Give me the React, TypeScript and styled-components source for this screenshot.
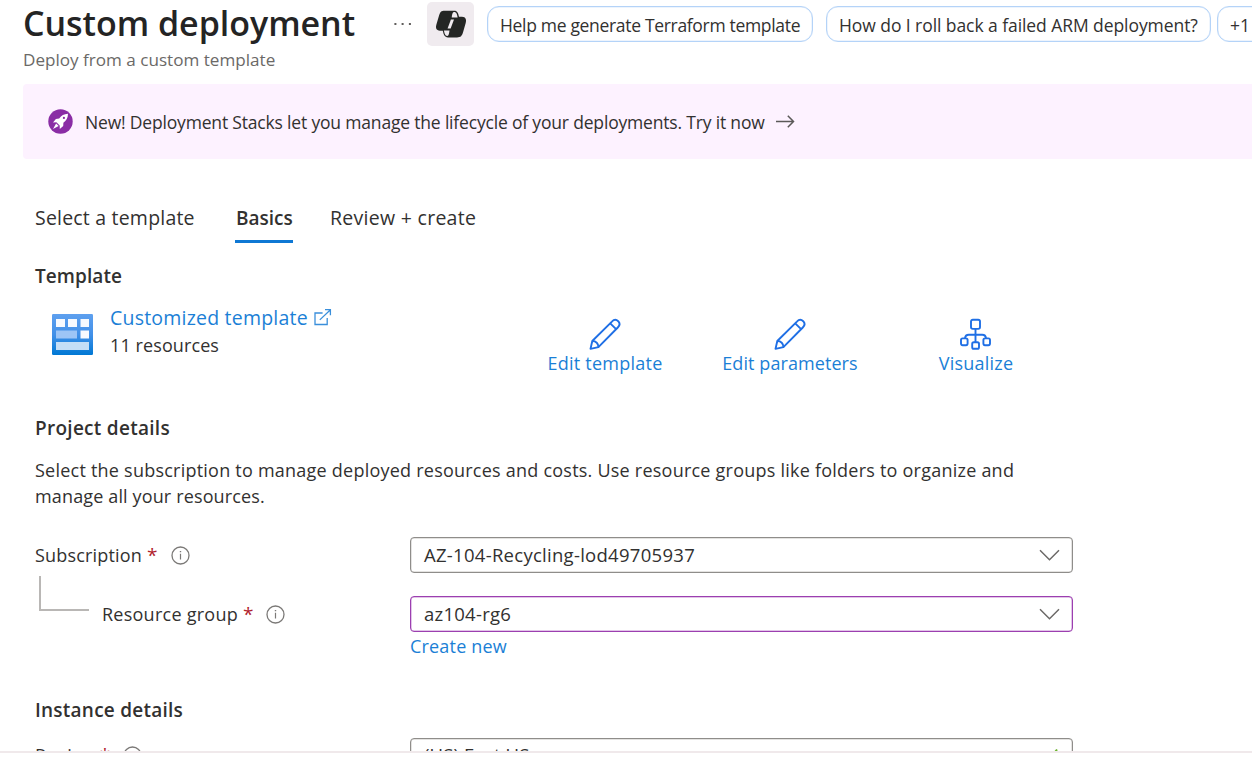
import React from "react";
import styled, { createGlobalStyle, css } from "styled-components";

const GlobalStyle = createGlobalStyle`
  * { box-sizing: border-box; }
  body {
    margin: 0;
    background: #fff;
    color: #323130;
    font-family: "Open Sans", "Noto Sans", sans-serif;
    font-size: 18px;
    overflow: hidden;
  }
  svg { display: block; flex: none; }
`;

const tracking = css<{ $ls?: number }>`
  letter-spacing: ${(p) => p.$ls ?? 0}px;
  white-space: nowrap;
`;

const Page = styled.div`
  width: 1252px;
  height: 775px;
  display: flex;
  flex-direction: column;
  overflow: hidden;
`;

const Blade = styled.main`
  height: 751px;
  flex: none;
  overflow: hidden;
`;

const Footer = styled.footer`
  flex: 1;
  border-top: 2px solid #f0e9eb;
  background: #fff;
`;

const TitleBar = styled.header`
  display: flex;
  align-items: center;
  height: 48px;
  padding-left: 23px;
`;

const Title = styled.h1`
  ${tracking}
  flex: none;
  margin: 0;
  width: 371px;
  font-size: 34px;
  line-height: 48px;
  padding-bottom: 2px;
  font-weight: 600;
  color: #242424;
`;

const MoreButton = styled.span`
  display: flex;
  flex: none;
  width: 33px;
`;

const CopilotButton = styled.span`
  display: flex;
  align-items: center;
  justify-content: center;
  flex: none;
  width: 47px;
  height: 44px;
  border-radius: 5px;
  background: #f0ebef;
  margin-right: 13px;
`;

const Chip = styled.span<{ $w: number; $gap: number }>`
  ${tracking}
  flex: none;
  display: flex;
  align-items: center;
  width: ${(p) => p.$w}px;
  height: 36px;
  margin-right: ${(p) => p.$gap}px;
  padding: 1px 0 0 12px;
  border: 1px solid #b4d3f8;
  box-shadow: inset 0 0 0 0.5px #dceafb;
  border-radius: 12px;
  font-size: 17.5px;
`;

const Subtitle = styled.div`
  ${tracking}
  padding-left: 23px;
  height: 36px;
  line-height: 23px;
  font-size: 17.1px;
  color: #6b6967;
`;

const Banner = styled.section`
  display: flex;
  align-items: center;
  height: 75px;
  margin-left: 23px;
  padding-left: 25px;
  border-radius: 4px 0 0 4px;
  background: #fdf2ff;
`;

const BannerText = styled.span`
  ${tracking}
  font-size: 17.5px;
  margin: 1px 11px 0 12px;
`;

const Tabs = styled.nav`
  display: flex;
  gap: 36px;
  height: 48px;
  margin: 36px 0 0 34px;
`;

const Tab = styled.span<{ $active?: boolean; $w: number }>`
  ${tracking}
  width: ${(p) => p.$w}px;
  height: 48px;
  padding-left: 1px;
  line-height: 46px;
  font-size: ${(p) => (p.$active ? 19 : 19.5)}px;
  font-weight: ${(p) => (p.$active ? 600 : 400)};
  border-bottom: 3px solid ${(p) => (p.$active ? "#0f78d4" : "transparent")};
`;

const Content = styled.div`
  padding-left: 35px;
`;

const SectionTitle = styled.h2<{ $top: number }>`
  ${tracking}
  margin: ${(p) => p.$top}px 0 0;
  font-size: 19px;
  line-height: 26px;
  font-weight: 600;
`;

const TemplateRow = styled.div`
  display: flex;
  height: 86px;
  padding: 15px 0 0 17px;
`;

const TemplateIconBox = styled.div`
  padding-top: 10px;
  width: 58px;
`;

const TemplateInfo = styled.div`
  width: 437px;
  line-height: 28px;
`;

const TemplateLink = styled.a`
  ${tracking}
  display: flex;
  align-items: center;
  gap: 6px;
  height: 27px;
  font-size: 19.5px;
  color: #1b7fd6;
`;

const ResourceCount = styled.div`
  ${tracking}
`;

const Action = styled.a<{ $w: number; $gap: number }>`
  ${tracking}
  display: flex;
  flex-direction: column;
  align-items: center;
  width: ${(p) => p.$w}px;
  margin-right: ${(p) => p.$gap}px;
  padding-top: 14px;
  line-height: 27px;
  color: #1b7fd6;
`;

const Paragraph = styled.p`
  margin: 16px 0 28px;
  line-height: 26px;
`;

const Line = styled.span`
  ${tracking}
  display: block;
`;

const Fields = styled.div<{ $top: number }>`
  padding-top: ${(p) => p.$top}px;
`;

const FieldRow = styled.div<{ $gap: number; $h?: number }>`
  display: flex;
  height: ${(p) => p.$h ?? 36}px;
  margin-bottom: ${(p) => p.$gap}px;
`;

const LabelCell = styled.div`
  display: flex;
  align-items: center;
  width: 375px;
  padding-top: 1px;
`;

const Label = styled.label`
  ${tracking}
  margin-bottom: 2px;
`;

const Required = styled.span`
  margin: 0 13px 2px 5px;
  color: #b0222c;
  font-size: 19px;
`;

const Branch = styled.span`
  align-self: flex-start;
  flex: none;
  width: 50px;
  height: 35px;
  margin: -21px 13px 0 4px;
  border: solid #b9b7b5;
  border-width: 0 0 2px 2px;
`;

const Select = styled.div<{ $focused?: boolean }>`
  ${tracking}
  display: flex;
  align-items: center;
  justify-content: space-between;
  width: 663px;
  height: 100%;
  padding: 0 12px 1px 13px;
  font-size: 18.5px;
  border: 1px solid ${(p) => (p.$focused ? "#9c3fb0" : "#8f8d8a")};
  box-shadow: inset 0 0 0 0.5px ${(p) => (p.$focused ? "#c58bd2" : "#c9c7c4")};
  border-radius: 4px;
`;

const CreateLink = styled.a`
  ${tracking}
  display: block;
  height: 28px;
  margin-left: 375px;
  line-height: 28px;
  color: #1b7fd6;
`;

const Dots = () => (
  <svg width="18" height="4" viewBox="0 0 18 4" fill="#5f5d5b">
    <rect x="0.4" y="1" width="2" height="2" />
    <rect x="7.6" y="1" width="2" height="2" />
    <rect x="14.9" y="1" width="2" height="2" />
  </svg>
);

const CopilotIcon = () => (
  <svg width="32" height="28" viewBox="0 0 32 28">
    <path d="M9.8.7H19.4C22.4.7 23.2 3 24 6.8H27C30.9 7 31.6 9.8 30.7 13L28.2 21.8C27 26 25.8 27.4 22 27.4H13C9.6 27.4 8.6 24.6 7.8 20.8H5C1 20.6.5 17.8 1.4 14.6L3.9 6C5.1 1.9 6.2.7 9.8.7Z" fill="#242624" />
    <path d="M18.8 2.1C21.4 1.9 22 4.2 22.6 7.4H16.7C17.1 4.6 17.5 2.4 18.8 2.1Z" fill="#f0ebef" />
    <path d="M8.9 20.6H14.5C14.1 23.4 13.8 25.9 12.3 26C10.2 26 9.5 23.4 8.9 20.6Z" fill="#f0ebef" />
    <path d="M15.9 9.4H19L15.6 18.6H12.6Z" fill="#f0ebef" />
  </svg>
);

const RocketBadge = () => (
  <svg width="25" height="25" viewBox="0 0 25 25">
    <circle cx="12.5" cy="12.5" r="12.2" fill="#8a2da5" />
    <path d="M20 4.8C15.9 5 13.4 6.6 11.2 9.6L7.9 9.9L5 13.4L8.4 13.3L11.7 16.6L11.8 19.9L15.2 17L15.4 13.8C18.3 11.7 19.9 9 20 4.8Z" fill="#fff" />
    <path d="M8.1 14.4L5 20L10.6 17Z" fill="#fff" />
    <circle cx="15.9" cy="8.9" r="1.1" fill="#8a2da5" />
  </svg>
);

const ArrowIcon = () => (
  <svg width="20" height="16" viewBox="0 0 20 16" fill="none" stroke="#5b5958" strokeWidth="1.5">
    <path d="M0 7.5H17.5M11.8 1.7L17.5 7.5L11.8 13.3" />
  </svg>
);

const TemplateIcon = () => (
  <svg width="41" height="41" viewBox="0 0 41 41">
    <defs>
      <linearGradient id="tile" x1="0" y1="0" x2="0" y2="1">
        <stop offset="0" stopColor="#5ea0ef" />
        <stop offset="0.5" stopColor="#4290e8" />
        <stop offset="1" stopColor="#0078d4" />
      </linearGradient>
    </defs>
    <rect width="41" height="41" rx="1.3" fill="url(#tile)" />
    <path d="M4 5H13V13H4ZM16 5H25V13H16ZM28.5 5H37V13H28.5ZM28.5 16.5H37V24.5H28.5Z" fill="#f6f9fe" />
    <path d="M4 16.5H25V24.5H4Z" fill="#9dc5f6" />
    <path d="M4 28H37V36H4Z" fill="#c5def6" />
  </svg>
);

const ExternalIcon = () => (
  <svg width="18" height="20" viewBox="0 0 18 20" fill="none" stroke="#3a8fdb" strokeWidth="1.3">
    <path d="M8.6 5H1V16.5H13.2V9.9M5.8 11.9L16.2 2M11 1.7H16.4V7.3" />
  </svg>
);

const PencilIcon = () => (
  <svg width="32" height="32" viewBox="0 0 32 32" fill="none" stroke="#1f6fe5" strokeWidth="1.9" strokeLinejoin="round">
    <path d="M1.5 30.9L3.3 23L22.9 3.6C24.9 1.5 27.4 1.5 29.2 3.2C30.9 5 30.9 7.5 28.8 9.5L9.4 29.1Z" />
    <path d="M21.2 5.3L27.1 11.2M3.3 23C6.8 22.9 9.6 25.6 9.4 29.1" />
  </svg>
);

const HierarchyIcon = () => (
  <svg width="32" height="32" viewBox="0 0 32 32" fill="none" stroke="#1f6fe5" strokeWidth="1.9">
    <rect x="11" y="1.7" width="9" height="9.2" rx="1.8" />
    <rect x="1" y="20.4" width="6.6" height="6.8" rx="1.6" />
    <rect x="12.2" y="24.2" width="6.8" height="6.6" rx="1.6" />
    <rect x="23.4" y="20.4" width="6.6" height="6.8" rx="1.6" />
    <path d="M15.5 10.9V24.2M5 20.4C5.2 18 6.5 16.8 8.8 16.8H22.2C24.5 16.8 25.8 18 26 20.4" />
  </svg>
);

const InfoIcon = () => (
  <svg width="19" height="19" viewBox="0 0 19 19">
    <circle cx="9.5" cy="9.5" r="8.5" fill="none" stroke="#7b7977" strokeWidth="1.3" />
    <path d="M8.9 7.8H10.1V13.4H8.9ZM8.8 4.9H10.2V6.3H8.8Z" fill="#7b7977" />
  </svg>
);

const ChevronIcon = () => (
  <svg width="21" height="12" viewBox="0 0 21 12" fill="none" stroke="#6b6967" strokeWidth="1.5">
    <path d="M1 1.2L10.5 10.7L20 1.2" />
  </svg>
);

const CheckIcon = () => (
  <svg width="16" height="14" viewBox="0 0 16 14" fill="none" stroke="#6bb32e" strokeWidth="2">
    <path d="M1 8L5 12L13 1.5" />
  </svg>
);

type FieldLabelProps = { text: string; ls: number; nested?: boolean };

const FieldLabel = ({ text, ls, nested }: FieldLabelProps) => (
  <LabelCell>
    {nested && <Branch />}
    <Label $ls={ls}>{text}</Label>
    <Required>*</Required>
    <InfoIcon />
  </LabelCell>
);

export default function App() {
  return (
    <Page>
      <GlobalStyle />
      <Blade>
        <TitleBar>
          <Title $ls={-0.03}>Custom deployment</Title>
          <MoreButton><Dots /></MoreButton>
          <CopilotButton><CopilotIcon /></CopilotButton>
          <Chip $w={326} $gap={13} $ls={-0.32}>Help me generate Terraform template</Chip>
          <Chip $w={385} $gap={6} $ls={-0.07}>How do I roll back a failed ARM deployment?</Chip>
          <Chip $w={60} $gap={0}>+1</Chip>
        </TitleBar>
        <Subtitle>Deploy from a custom template</Subtitle>
        <Banner>
          <RocketBadge />
          <BannerText $ls={-0.18}>
            New! Deployment Stacks let you manage the lifecycle of your deployments. Try it now
          </BannerText>
          <ArrowIcon />
        </Banner>
        <Tabs>
          <Tab $w={165} $ls={0.2}>Select a template</Tab>
          <Tab $w={58} $ls={0} $active>Basics</Tab>
          <Tab $w={150} $ls={0.28}>Review + create</Tab>
        </Tabs>
        <Content>
          <SectionTitle $top={20} $ls={0.07}>Template</SectionTitle>
          <TemplateRow>
            <TemplateIconBox><TemplateIcon /></TemplateIconBox>
            <TemplateInfo>
              <TemplateLink $ls={0.21}>Customized template <ExternalIcon /></TemplateLink>
              <ResourceCount $ls={0.1}>11 resources</ResourceCount>
            </TemplateInfo>
            <Action $w={116} $gap={59} $ls={0.24}><PencilIcon />Edit template</Action>
            <Action $w={136} $gap={80} $ls={0.08}><PencilIcon />Edit parameters</Action>
            <Action $w={76} $gap={0} $ls={0.24}><HierarchyIcon />Visualize</Action>
          </TemplateRow>
          <SectionTitle $top={40} $ls={0.28}>Project details</SectionTitle>
          <Paragraph>
            <Line $ls={0.23}>
              Select the subscription to manage deployed resources and costs. Use resource groups like folders to organize and
            </Line>
            <Line $ls={0.14}>manage all your resources.</Line>
          </Paragraph>
          <FieldRow $gap={23}>
            <FieldLabel text="Subscription" ls={0.18} />
            <Select $ls={0.28}>AZ-104-Recycling-lod49705937<ChevronIcon /></Select>
          </FieldRow>
          <FieldRow $gap={0}>
            <FieldLabel text="Resource group" ls={0.25} nested />
            <Select $ls={0.25} $focused>az104-rg6<ChevronIcon /></Select>
          </FieldRow>
          <CreateLink $ls={0.19}>Create new</CreateLink>
          <SectionTitle $top={37} $ls={0.24}>Instance details</SectionTitle>
          <Fields $top={15}>
            <FieldRow $gap={0} $h={34}>
              <FieldLabel text="Region" ls={0.4} />
              <Select $ls={0.15}>(US) East US<CheckIcon /></Select>
            </FieldRow>
          </Fields>
        </Content>
      </Blade>
      <Footer />
    </Page>
  );
}
